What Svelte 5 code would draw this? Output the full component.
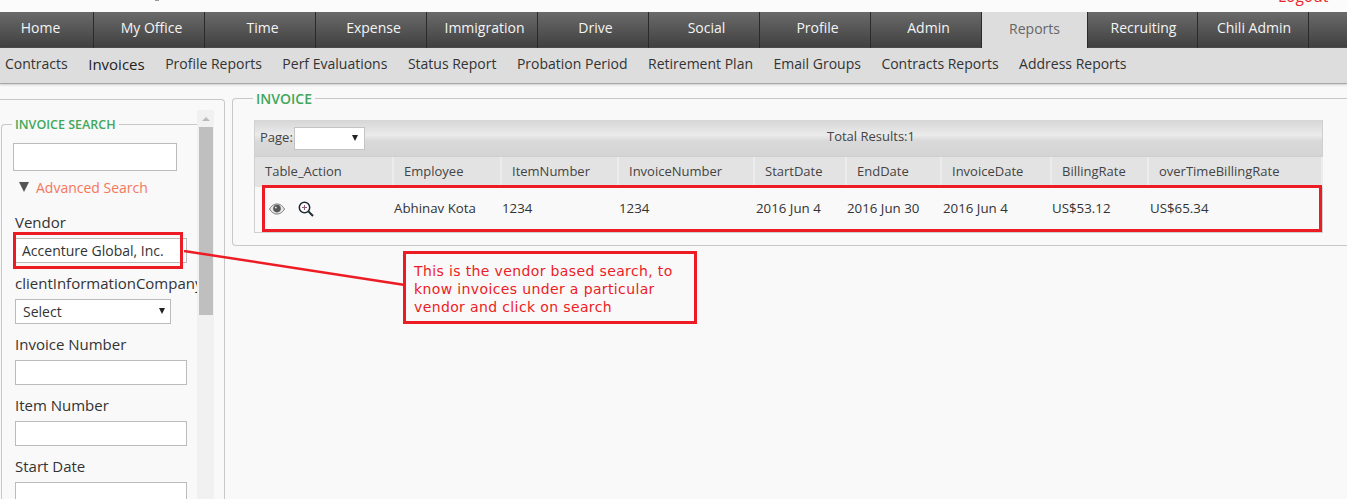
<script>
  const tabs = [
    ['Home', 94, 0, 12], ['My Office', 111, 5, 0], ['Time', 111, 5, 0], ['Expense', 111, 5, 0], ['Immigration', 111, 5, 0],
    ['Drive', 111, 5, 0], ['Social', 111, 5, 0], ['Profile', 111, 5, 0], ['Admin', 111, 5, 0], ['Reports', 106, 0, 0],
    ['Recruiting', 110, 2, 0], ['Chili Admin', 111, 2, 0]
  ];
  const subs = ['Contracts', 'Invoices', 'Profile Reports', 'Perf Evaluations', 'Status Report', 'Probation Period', 'Retirement Plan', 'Email Groups', 'Contracts Reports', 'Address Reports'];
  const cols = [
    ['Table_Action', 139], ['Employee', 108], ['ItemNumber', 117], ['InvoiceNumber', 136], ['StartDate', 92],
    ['EndDate', 95], ['InvoiceDate', 110], ['BillingRate', 97], ['overTimeBillingRate', 174]
  ];
  const cells = [
    ['Abhinav Kota', 108], ['1234', 117], ['1234', 137], ['2016 Jun 4', 91],
    ['2016 Jun 30', 96], ['2016 Jun 4', 109], ['US$53.12', 98], ['US$65.34', 170]
  ];
</script>

<div class="page">
  <div class="top"><span class="sliver"></span><span class="logout">Logout</span></div>

  <nav class="tabs">
    {#each tabs as [name, w, pl, pr]}
      <div class="tab" class:active={name === 'Reports'} style="width:{w}px;padding-left:{pl}px;padding-right:{pr}px">{name}</div>
    {/each}
  </nav>

  <div class="subnav">
    {#each subs as s}
      <span class="sub" class:cur={s === 'Invoices'}>{s}</span>
    {/each}
  </div>

  <div class="main">
    <aside class="side">
      <div class="side-inner">
        <fieldset class="search">
          <legend>INVOICE SEARCH</legend>
          <div class="box first"></div>
          <div class="adv"><span class="tri"></span><span>Advanced Search</span></div>
          <div class="label vendor">Vendor</div>
          <div class="box filled">Accenture Global, Inc.</div>
          <div class="label clip">clientInformationCompany</div>
          <div class="select">Select<span class="arrow"></span></div>
          <div class="label">Invoice Number</div>
          <div class="box"></div>
          <div class="label">Item Number</div>
          <div class="box"></div>
          <div class="label">Start Date</div>
          <div class="box"></div>
        </fieldset>
        <div class="scroll">
          <span class="up"></span>
          <div class="thumb"></div>
        </div>
      </div>
    </aside>

    <section class="content">
      <fieldset class="invoice">
        <legend>INVOICE</legend>
        <div class="grid">
          <div class="toolbar">
            <span class="page-label">Page:</span>
            <div class="pager"><span class="arrow"></span></div>
            <span class="total">Total Results:1</span>
          </div>
          <div class="thead">
            {#each cols as [c, w]}
              <div class="th" style="width:{w}px">{c}</div>
            {/each}
          </div>
          <div class="row">
            <div class="td icons" style="width:139px">
              <svg width="16" height="12" viewBox="0 0 16 12">
                <path d="M0.5 6C3 2 5.5 1 8 1s5 1 7.5 5C13 10 10.5 11 8 11S3 10 .5 6z" fill="#e6e6e6" stroke="#777" stroke-width="1"/>
                <circle cx="8" cy="5.6" r="3.8" fill="#555"/>
                <circle cx="6.8" cy="4.4" r="1" fill="#ddd"/>
              </svg>
              <svg width="16" height="16" viewBox="0 0 16 16">
                <circle cx="6.5" cy="6.5" r="5.2" fill="#fff" stroke="#1d2a33" stroke-width="1.5"/>
                <path d="M10.4 10.4L15 15" stroke="#1d2a33" stroke-width="2"/>
                <path d="M4 6.5h5M6.5 4v5" stroke="#8a5a78" stroke-width="1.1"/>
              </svg>
            </div>
            {#each cells as [c, w]}
              <div class="td" style="width:{w}px">{c}</div>
            {/each}
          </div>
        </div>
      </fieldset>
    </section>
  </div>

  <svg class="connector" width="230" height="40" viewBox="0 0 230 40">
    <line x1="1" y1="1" x2="222" y2="35" stroke="#ed1c24" stroke-width="2.5"/>
  </svg>
  <div class="mark vendor-mark"></div>
  <div class="mark row-mark"></div>
  <div class="note">This is the vendor based search, to know invoices under a particular vendor and click on search</div>
</div>

<style>
  :global(body) { margin: 0; background: #f9f9f9; }
  .page {
    position: relative;
    width: 1347px;
    height: 499px;
    overflow: hidden;
    background: #f9f9f9;
    font-family: "Open Sans", sans-serif;
    font-size: 14px;
    color: #333;
  }
  .top { height: 12px; position: relative; overflow: hidden; background: #fbfbfb; }
  .sliver { position: absolute; left: 155px; top: 0; width: 4px; height: 1px; background: #999; }
  .logout {
    position: absolute;
    left: 1278px;
    top: -14px;
    font-size: 15.5px;
    line-height: 20px;
    color: #e8262c;
  }
  .tabs { display: flex; height: 36px; background: linear-gradient(#6a6a6a, #3f3f3f); }
  .tab {
    box-sizing: border-box;
    flex: none;
    text-align: center;
    line-height: 32px;
    color: #f4f4f4;
    border-right: 1px solid #2a2a2a;
  }
  .tab.active { background: #dddddd; color: #666; line-height: 34px; border-right-color: #2a2a2a; }
  .subnav {
    box-sizing: border-box;
    height: 36px;
    display: flex;
    gap: 20.5px;
    padding-left: 5px;
    background: #dddddd;
    border-bottom: 1px solid #a8a8a8;
    box-shadow: 0 1px 2px #ccc;
    line-height: 31px;
    color: #333;
  }
  .sub.cur { font-size: 15px; color: #222; line-height: 33px; }
  .main { display: flex; padding-top: 15px; }
  .side {
    box-sizing: border-box;
    flex: none;
    width: 225px;
    height: 400px;
    border: 1px solid #c8c8c8;
    border-left: 0;
    border-bottom: 0;
    border-top-right-radius: 4px;
  }
  .side-inner { display: flex; align-items: flex-start; padding-top: 16px; }
  fieldset { margin: 0; box-sizing: border-box; border: 1px solid #c8c8c8; }
  legend {
    padding: 0 3px;
    font-size: 12.5px;
    line-height: 17px;
    font-weight: 600;
    color: #3fa85c;
  }
  .search {
    flex: none;
    width: 196px;
    height: 390px;
    margin-left: 1px;
    padding: 10px 0 0 11px;
    border-right: 0;
    border-radius: 4px 0 0 0;
    overflow: hidden;
  }
  .search legend { margin-left: -1px; }
  .box {
    box-sizing: border-box;
    width: 172px;
    height: 25px;
    background: #fff;
    border: 1px solid #bbb;
    margin-left: 2px;
  }
  .box.first { width: 164px; height: 28px; margin-left: 0; }
  .box.filled { padding-left: 6px; line-height: 24px; font-size: 14px; color: #333; white-space: nowrap; }
  .adv { display: flex; align-items: center; gap: 7px; margin: 5px 0 0 6px; height: 22px; color: #f4775a; }
  .tri {
    width: 0;
    height: 0;
    border-left: 5px solid transparent;
    border-right: 5px solid transparent;
    border-top: 10px solid #555;
  }
  .label {
    margin: 10px 0 6px 2px;
    font-size: 15px;
    line-height: 20px;
    white-space: nowrap;
    color: #333;
  }
  .label.vendor { margin-top: 14px; margin-bottom: 6px; }
  .label.clip { width: 182px; overflow: hidden; }
  .select {
    box-sizing: border-box;
    position: relative;
    width: 156px;
    height: 25px;
    margin-left: 2px;
    padding-left: 7px;
    line-height: 23px;
    font-size: 14px;
    background: #fff;
    border: 1px solid #bbb;
  }
  .select .arrow { right: 5px; top: 8px; }
  .arrow {
    position: absolute;
    width: 0;
    height: 0;
    border-left: 3px solid transparent;
    border-right: 3px solid transparent;
    border-top: 6px solid #222;
  }
  .scroll {
    flex: none;
    width: 17px;
    height: 390px;
    margin-top: -6px;
    background: #f1f1f1;
    position: relative;
  }
  .up {
    position: absolute;
    left: 5px;
    top: 7px;
    width: 0;
    height: 0;
    border-left: 4px solid transparent;
    border-right: 4px solid transparent;
    border-bottom: 4px solid #bbb;
  }
  .thumb { position: absolute; left: 2px; right: 1px; top: 17px; height: 188px; background: #bfbfbf; }
  .content { flex: 1; padding-left: 7px; margin-top: -10px; }
  .invoice {
    width: 1120px;
    height: 157px;
    padding: 12px 0 0 21px;
    border-right: 0;
    border-radius: 4px 0 0 4px;
  }
  .invoice legend { margin-left: -1px; font-size: 14px; line-height: 19px; }
  .grid { width: 1069px; border: 1px solid #d0d0d0; border-top: 0; box-sizing: border-box; height: 113px; }
  .toolbar {
    box-sizing: border-box;
    position: relative;
    height: 37px;
    display: flex;
    align-items: center;
    padding-left: 5px;
    background: linear-gradient(#d6d6d6, #ebebeb 42%, #d9d9d9 58%, #d4d4d4);
    font-size: 13px;
    color: #444;
    border-bottom: 1px solid #cfcfcf;
  }
  .page-label { width: 34px; margin-bottom: 3px; }
  .pager {
    box-sizing: border-box;
    position: relative;
    width: 71px;
    height: 23px;
    background: #fff;
    border: 1px solid #c4c4c4;
  }
  .pager .arrow { right: 6px; top: 7px; }
  .total { position: absolute; left: 572px; top: 7px; }
  .thead { display: flex; height: 30px; background: #e3e3e3; }
  .th {
    box-sizing: border-box;
    flex: none;
    padding-left: 10px;
    line-height: 28px;
    font-size: 13px;
    color: #444;
    border-right: 2px solid #ececec;
  }
  .row { display: flex; height: 45px; }
  .td {
    box-sizing: border-box;
    flex: none;
    line-height: 42px;
    font-size: 13.3px;
    color: #333;
    padding-left: 0;
    white-space: nowrap;
  }
  .td.icons { display: flex; align-items: center; gap: 13px; padding-left: 14px; padding-bottom: 1px; }
  .connector { position: absolute; left: 183px; top: 250px; }
  .mark { position: absolute; box-sizing: border-box; border: 3px solid #ed1c24; }
  .vendor-mark { left: 13px; top: 232px; width: 170px; height: 37px; }
  .row-mark { left: 262px; top: 185px; width: 1060px; height: 47px; }
  .note {
    box-sizing: border-box;
    position: absolute;
    left: 403px;
    top: 251px;
    width: 294px;
    height: 73px;
    padding: 8px 6px 0 8px;
    border: 3px solid #ed1c24;
    background: #f9f9f9;
    font-family: "DejaVu Sans", sans-serif;
    font-size: 14px;
    letter-spacing: .37px;
    line-height: 18px;
    color: #ed1c24;
  }
</style>
